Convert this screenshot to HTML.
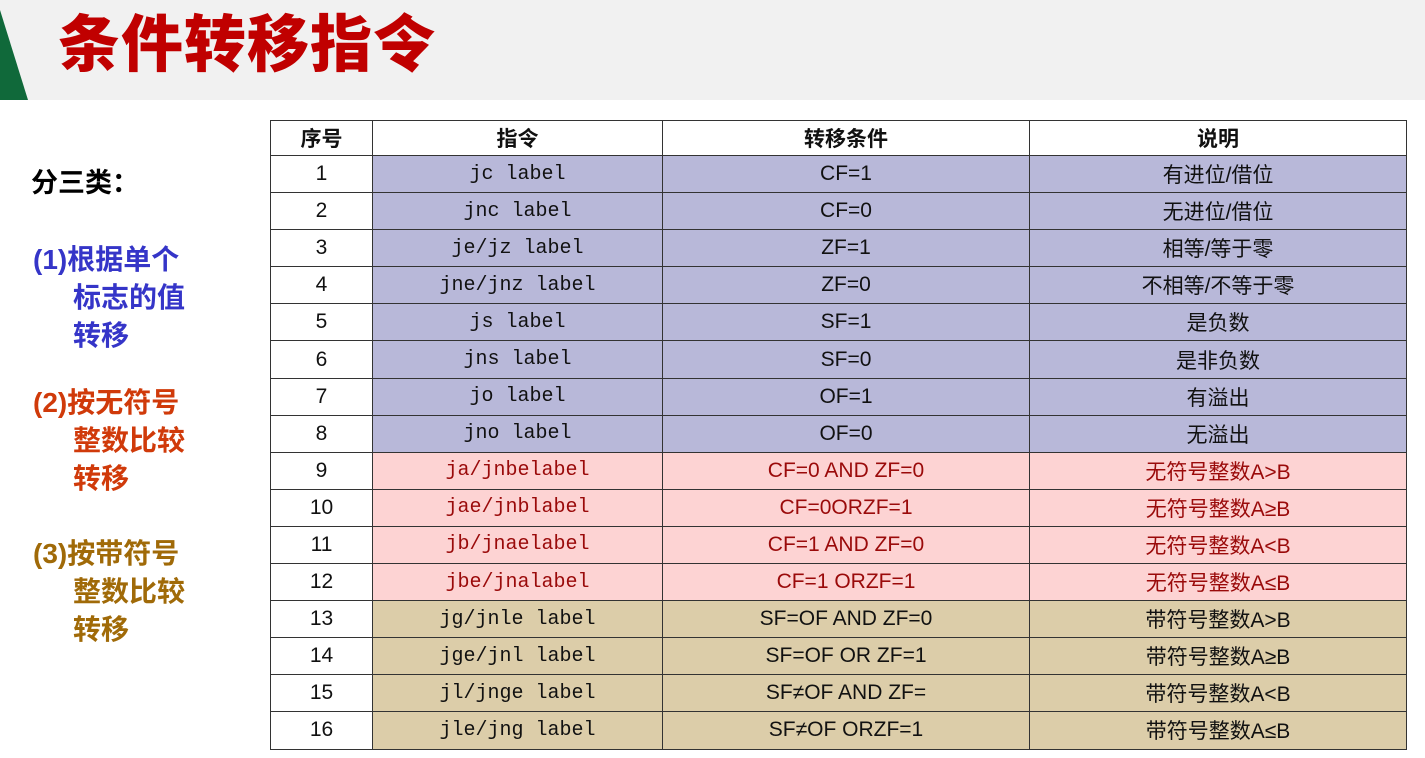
<!DOCTYPE html>
<html><head><meta charset="utf-8"><style>
*{margin:0;padding:0;box-sizing:border-box}
body{width:1425px;height:758px;background:#fff;position:relative;overflow:hidden;font-family:"Liberation Sans","Noto Sans CJK SC",sans-serif}
.bar{position:absolute;left:0;top:0;width:1425px;height:100px;background:#f1f1f1}
.title{position:absolute;left:58px;top:6px;font-size:62px;font-weight:900;color:#c00000;letter-spacing:1px;line-height:80px}
.l{position:absolute;font-weight:bold;font-size:28px;line-height:38px}
table{position:absolute;left:270px;top:120px;border-collapse:collapse;width:1136px;table-layout:fixed}
td,th{border:1.5px solid #333;text-align:center;font-size:21px;padding:0;color:#111}
th{height:35px;font-weight:bold;background:#fff}
td{height:37.1px}
td.n{background:#fff}
.c{font-family:"Liberation Mono",monospace;font-size:20px}
.p td{background:#b8b8d9}
.r td{background:#fdd3d3;color:#9a0a0a}
.t td{background:#dccda9}
.r td.n,.p td.n,.t td.n{background:#fff;color:#111}
</style></head><body>
<div class="bar"></div>
<svg style="position:absolute;left:0;top:0" width="30" height="100"><polygon points="0,10 28,100 0,100" fill="#10693a"/></svg>
<div class="title">条件转移指令</div>
<div class="l" style="left:31px;top:164px;color:#000;font-size:27px">分三类：</div>
<div class="l" style="left:33px;top:241px;color:#3535c8">(1)根据单个<br><span style="padding-left:40px">标志的值</span><br><span style="padding-left:40px">转移</span></div>
<div class="l" style="left:33px;top:384px;color:#d03a0a">(2)按无符号<br><span style="padding-left:40px">整数比较</span><br><span style="padding-left:40px">转移</span></div>
<div class="l" style="left:33px;top:535px;color:#a06a08">(3)按带符号<br><span style="padding-left:40px">整数比较</span><br><span style="padding-left:40px">转移</span></div>
<table>
<colgroup><col style="width:102px"><col style="width:290px"><col style="width:367px"><col style="width:377px"></colgroup>
<tr><th>序号</th><th>指令</th><th>转移条件</th><th>说明</th></tr>
<tr class="p"><td class="n">1</td><td class="c">jc label</td><td>CF=1</td><td>有进位/借位</td></tr>
<tr class="p"><td class="n">2</td><td class="c">jnc label</td><td>CF=0</td><td>无进位/借位</td></tr>
<tr class="p"><td class="n">3</td><td class="c">je/jz label</td><td>ZF=1</td><td>相等/等于零</td></tr>
<tr class="p"><td class="n">4</td><td class="c">jne/jnz label</td><td>ZF=0</td><td>不相等/不等于零</td></tr>
<tr class="p"><td class="n">5</td><td class="c">js label</td><td>SF=1</td><td>是负数</td></tr>
<tr class="p"><td class="n">6</td><td class="c">jns label</td><td>SF=0</td><td>是非负数</td></tr>
<tr class="p"><td class="n">7</td><td class="c">jo label</td><td>OF=1</td><td>有溢出</td></tr>
<tr class="p"><td class="n">8</td><td class="c">jno label</td><td>OF=0</td><td>无溢出</td></tr>
<tr class="r"><td class="n">9</td><td class="c">ja/jnbelabel</td><td>CF=0 AND ZF=0</td><td>无符号整数A&gt;B</td></tr>
<tr class="r"><td class="n">10</td><td class="c">jae/jnblabel</td><td>CF=0ORZF=1</td><td>无符号整数A≥B</td></tr>
<tr class="r"><td class="n">11</td><td class="c">jb/jnaelabel</td><td>CF=1 AND ZF=0</td><td>无符号整数A&lt;B</td></tr>
<tr class="r"><td class="n">12</td><td class="c">jbe/jnalabel</td><td>CF=1 ORZF=1</td><td>无符号整数A≤B</td></tr>
<tr class="t"><td class="n">13</td><td class="c">jg/jnle label</td><td>SF=OF AND ZF=0</td><td>带符号整数A&gt;B</td></tr>
<tr class="t"><td class="n">14</td><td class="c">jge/jnl label</td><td>SF=OF OR ZF=1</td><td>带符号整数A≥B</td></tr>
<tr class="t"><td class="n">15</td><td class="c">jl/jnge label</td><td>SF≠OF AND ZF=</td><td>带符号整数A&lt;B</td></tr>
<tr class="t"><td class="n">16</td><td class="c">jle/jng label</td><td>SF≠OF ORZF=1</td><td>带符号整数A≤B</td></tr>
</table>
</body></html>
